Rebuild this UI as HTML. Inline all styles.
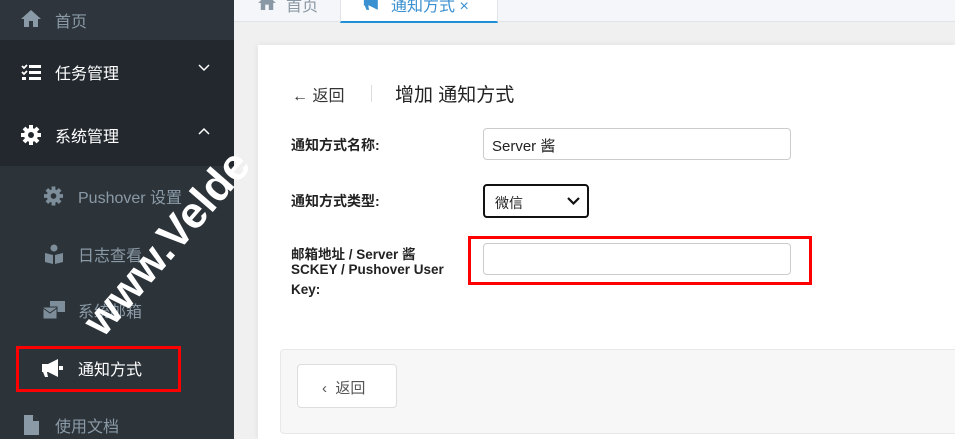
<!DOCTYPE html>
<html><head><meta charset="utf-8"><style>
*{margin:0;padding:0;box-sizing:border-box}
html,body{width:955px;height:439px;overflow:hidden}
body{position:relative;background:#f0f0f0;font-family:"Liberation Sans","Noto Sans CJK SC",sans-serif;}
.sb{position:absolute;left:0;top:0;width:234px;height:439px;background:#2c3339}
.row{position:absolute;left:0;width:234px;color:#8a9aa6;font-size:16px}
.row span{position:absolute;top:50%;transform:translateY(-50%)}
.ic{position:absolute;top:50%;transform:translateY(-50%)}
.tabs{position:absolute;left:234px;top:0;width:721px;height:22px;background:#f5f6f9;border-bottom:1px solid #e0e3e8}
.tab{position:absolute;top:0;height:22px;font-size:16px;color:#8a98a5}
.card{position:absolute;left:258px;top:45px;width:697px;height:394px;background:#fff;box-shadow:0 0 6px rgba(0,0,0,.08)}
.lbl{position:absolute;font-size:14px;font-weight:bold;color:#222;line-height:15px}
.inp{position:absolute;border:1px solid #ccc;border-radius:4px;background:#fff}
</style></head><body>
<div class="sb">
 <div class="row" style="top:-20px;height:60px;background:#2f353c"><svg class="ic" style="left:20px;margin-top:8px" width="22" height="18" viewBox="0 0 22 18"><path d="M11 1 L1 10 H4 V18 H9 V12 H13 V18 H18 V10 H21 Z" fill="#8a9aa6"/></svg><span style="left:55px;margin-top:10px">首页</span></div>
 <div class="row" style="top:40px;height:63px;background:#22282e;color:#fff"><svg class="ic" style="left:21px" width="20" height="16" viewBox="0 0 20 16"><path d="M1 2l2 2 3-3M1 8l2 2 3-3" stroke="#fff" stroke-width="1.8" fill="none"/><rect x="8" y="1" width="12" height="3" fill="#fff"/><rect x="8" y="7" width="12" height="3" fill="#fff"/><rect x="8" y="13" width="12" height="3" fill="#fff"/><rect x="1" y="13" width="4" height="3" fill="#fff"/></svg><span style="left:55px">任务管理</span><svg class="ic" style="left:198px;margin-top:-4px" width="12" height="8"><path d="M1 1l5 5 5-5" stroke="#fff" stroke-width="1.5" fill="none"/></svg></div>
 <div class="row" style="top:103px;height:63px;background:#22282e;color:#fff"><svg class="ic" style="left:21px" width="20" height="20" viewBox="0 0 20 20"><circle cx="10" cy="10" r="7" fill="#fff"/><g stroke="#fff" stroke-width="4"><path d="M10 0v20M0 10h20M3 3l14 14M17 3L3 17"/></g><circle cx="10" cy="10" r="3" fill="#22282e"/></svg><span style="left:55px">系统管理</span><svg class="ic" style="left:198px;margin-top:-4px" width="12" height="8"><path d="M1 7l5-5 5 5" stroke="#fff" stroke-width="1.5" fill="none"/></svg></div>
 <div class="row" style="top:166px;height:60px"><svg class="ic" style="left:44px" width="19" height="19" viewBox="0 0 20 20"><circle cx="10" cy="10" r="7" fill="#7d8e9a"/><g stroke="#7d8e9a" stroke-width="4"><path d="M10 0v20M0 10h20M3 3l14 14M17 3L3 17"/></g><circle cx="10" cy="10" r="3" fill="#2c3339"/></svg><span style="left:78px">Pushover 设置</span></div>
 <div class="row" style="top:224px;height:60px"><svg class="ic" style="left:44px" width="20" height="20" viewBox="0 0 20 20"><circle cx="10" cy="4" r="3.5" fill="#7d8e9a"/><path d="M1 9l8 2v9l-8-2zM19 9l-8 2v9l8-2z" fill="#7d8e9a"/></svg><span style="left:78px">日志查看</span></div>
 <div class="row" style="top:280px;height:60px"><svg class="ic" style="left:42px" width="24" height="20" viewBox="0 0 24 20"><rect x="8" y="1" width="15" height="11" fill="#7d8e9a"/><rect x="1" y="7" width="14" height="12" fill="#7d8e9a" stroke="#2c3339"/><path d="M1 8l7 5 7-5" stroke="#2c3339" fill="none"/></svg><span style="left:78px">系统邮箱</span></div>
 <div style="position:absolute;left:16px;top:346px;width:165px;height:46px;border:3px solid #f00"></div>
 <div class="row" style="top:340px;height:55px;color:#fff"><svg class="ic" style="left:41px" width="23" height="18" viewBox="0 0 23 18"><path d="M1 5h6l10-5v18l-10-5h-1l1 5h-3l-2-5h-1z" fill="#fff"/><rect x="18" y="7" width="4" height="4" fill="#fff"/></svg><span style="left:78px">通知方式</span></div>
 <div class="row" style="top:395px;height:60px"><svg class="ic" style="left:24px" width="15" height="20" viewBox="0 0 15 20"><path d="M0 0h9l6 6v14H0z" fill="#8a9aa6"/><path d="M9 0v6h6" fill="#2c3339"/></svg><span style="left:55px">使用文档</span></div>
</div>
<div class="tabs">
 <div class="tab" style="left:0;width:106px"><svg style="position:absolute;left:22px;top:-6px" width="22" height="16" viewBox="0 0 22 18"><path d="M11 1 L1 10 H4 V18 H9 V12 H13 V18 H18 V10 H21 Z" fill="#8a98a5"/></svg><span style="position:absolute;left:52px;top:-8px">首页</span></div>
 <div class="tab" style="left:106px;width:158px;background:#fff;border-left:1px solid #e0e3e8;border-right:1px solid #e0e3e8;border-bottom:2px solid #1e90d6;height:23px;color:#3a90d0"><svg style="position:absolute;left:22px;top:-6px" width="20" height="16" viewBox="0 0 23 18"><path d="M1 5h6l10-5v18l-10-5h-1l1 5h-3l-2-5h-1z" fill="#3a90d0"/></svg><span style="position:absolute;left:50px;top:-8px">通知方式 ×</span></div>
</div>
<div style="position:absolute;left:102px;top:338px;width:0;height:0;transform:rotate(-49deg);transform-origin:0 0"><span style="position:absolute;left:0;top:-38px;font:bold 44px 'Liberation Sans',sans-serif;color:#fff;white-space:nowrap">www.Velde</span></div>
<div class="card">
 <div style="position:absolute;left:34px;top:37px;font-size:16px;color:#333">← 返回</div>
 <div style="position:absolute;left:113px;top:40px;width:1px;height:17px;background:#ddd"></div>
 <div style="position:absolute;left:137px;top:35px;font-size:19px;color:#222">增加 通知方式</div>
 <div class="lbl" style="left:33px;top:93px">通知方式名称:</div>
 <div class="inp" style="left:225px;top:83px;width:308px;height:32px;font-size:15px;color:#222;padding:6px 0 0 8px">Server 酱</div>
 <div class="lbl" style="left:33px;top:149px">通知方式类型:</div>
 <div class="inp" style="left:225px;top:139px;width:106px;height:34px;border:2px solid #111;font-size:14px;padding:7px 0 0 10px;color:#222">微信<svg style="position:absolute;left:82px;top:11px" width="13" height="9"><path d="M1 1l5.5 5.5L12 1" stroke="#111" stroke-width="2.2" fill="none"/></svg></div>
 <div class="lbl" style="left:33px;top:202px;font-size:13.5px">邮箱地址 / Server 酱<br>SCKEY / Pushover User<br><span style="line-height:25px">Key:</span></div>
 <div style="position:absolute;left:210px;top:191px;width:344px;height:49px;border:3px solid #f00"></div>
 <div class="inp" style="left:225px;top:198px;width:308px;height:32px"></div>
 <div style="position:absolute;left:22px;top:304px;width:680px;height:85px;background:#f7f7f7;border:1px solid #e8e8e8;border-radius:4px">
  <div style="position:absolute;left:16px;top:14px;width:100px;height:44px;background:#fff;border:1px solid #ddd;border-radius:4px;font-size:15px;color:#555;padding:12px 0 0 24px">‹&nbsp; 返回</div>
 </div>
</div>
</body></html>
